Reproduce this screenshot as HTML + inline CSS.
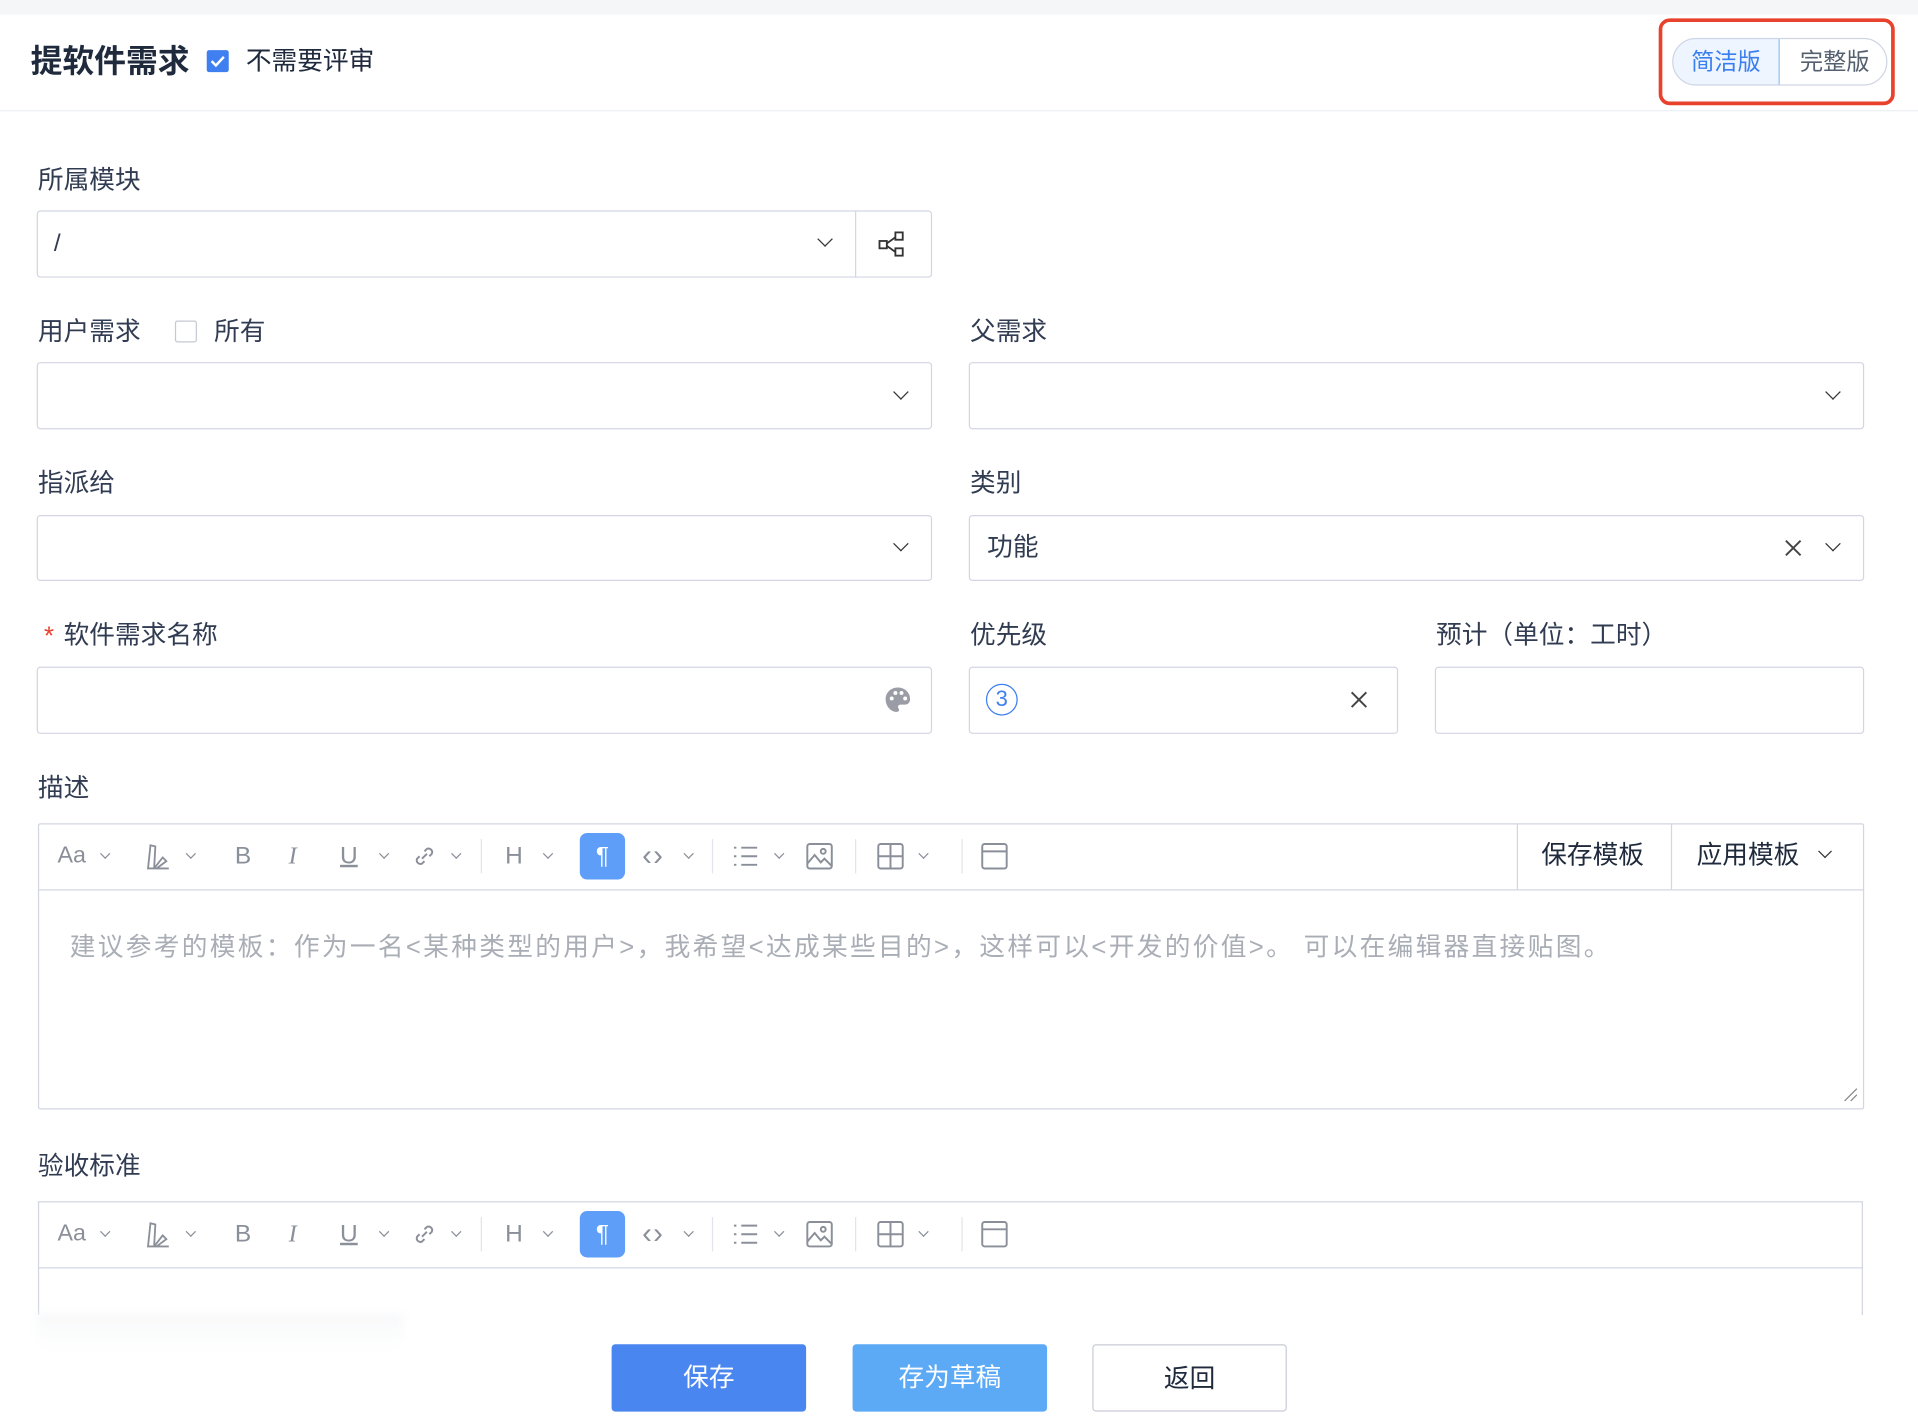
<!DOCTYPE html>
<html><head><meta charset="utf-8"><style>
html,body{margin:0;padding:0;width:1918px;height:1420px;overflow:hidden;background:#fff}
#w{position:absolute;left:0;top:0;width:1568px;height:1161px;transform:scale(1.22321);transform-origin:0 0;font-family:"Liberation Sans","Noto Sans CJK SC",sans-serif;color:#313c52}
.a{position:absolute}
.lbl{position:absolute;font-size:21px;line-height:24px;color:#313c52}
.box{position:absolute;border:1px solid #d3d6e2;border-radius:3px;box-sizing:border-box;background:#fff}
.chev{position:absolute;width:8px;height:8px;border-right:1.6px solid #333;border-bottom:1.6px solid #333;transform:rotate(45deg)}
.sc{position:absolute;width:5px;height:5px;border-right:1.3px solid #8a8f99;border-bottom:1.3px solid #8a8f99;transform:rotate(45deg)}
.ti{position:absolute;font-size:20px;color:#8a8f99;line-height:24px}
.sep{position:absolute;width:1px;height:28px;background:#e2e4ea}
.btn{position:absolute;height:55px;width:159px;border-radius:3px;box-sizing:border-box;font-size:21px;line-height:55px;text-align:center}
</style></head><body><div id="w">
<div class="a" style="left:0;top:0;width:1568px;height:12px;background:#f5f6f8"></div>
<div class="a" style="left:0;top:90px;width:1568px;height:1px;background:#eceef2"></div>
<div class="a" style="left:25px;top:35px;font-size:26px;line-height:30px;font-weight:bold;color:#202a3d">提软件需求</div>
<div class="a" style="left:169px;top:41px;width:18px;height:18px;background:#3f7ff0;border-radius:2px"><svg width="18" height="18"><path d="M4 9l3.5 3.5L14 5.5" stroke="#fff" stroke-width="2" fill="none"/></svg></div>
<div class="a" style="left:201px;top:39px;font-size:21px;line-height:24px;color:#202a3d">不需要评审</div>
<div class="a" style="left:1356px;top:15px;width:193px;height:71px;border:3px solid #e8412c;border-radius:9px;box-sizing:border-box"></div>
<div class="a" style="left:1367px;top:31px;width:176px;height:39px;border:1px solid #d0d5e3;border-radius:20px;box-sizing:border-box;overflow:hidden;font-size:19px;line-height:39px">
<div class="a" style="left:-1px;top:-1px;width:88px;height:39px;background:#eef5ff;border:1px solid #8fc0f8;border-radius:20px 0 0 20px;box-sizing:border-box;color:#3a7ff0;text-align:center;line-height:39px">简洁版</div>
<div class="a" style="left:88px;top:0;width:88px;text-align:center;color:#55606f">完整版</div></div>

<div class="lbl" style="left:31px;top:136px">所属模块</div>
<div class="box" style="left:30px;top:172px;width:732px;height:55px"></div>
<div class="a" style="left:699px;top:172px;width:1px;height:55px;background:#d3d6e2"></div>
<div class="a" style="left:44px;top:188px;font-size:20px">/</div>
<div class="chev" style="left:670px;top:191px"></div>
<svg class="a" style="left:717px;top:187px" width="25" height="25" viewBox="0 0 25 25" fill="none" stroke="#333" stroke-width="1.5"><rect x="2" y="10" width="6" height="6"/><rect x="15" y="3" width="6" height="6"/><rect x="15" y="16" width="6" height="6"/><path d="M8 12l7-5M8 14l7 5"/></svg>

<div class="lbl" style="left:31px;top:260px">用户需求</div>
<div class="a" style="left:143px;top:262px;width:18px;height:18px;border:1px solid #c5c9d4;border-radius:2px;box-sizing:border-box"></div>
<div class="lbl" style="left:175px;top:260px">所有</div>
<div class="lbl" style="left:793px;top:260px">父需求</div>
<div class="box" style="left:30px;top:296px;width:732px;height:55px"></div><div class="chev" style="left:732px;top:316px"></div>
<div class="box" style="left:792px;top:296px;width:732px;height:55px"></div><div class="chev" style="left:1494px;top:316px"></div>

<div class="lbl" style="left:31px;top:384px">指派给</div>
<div class="lbl" style="left:793px;top:384px">类别</div>
<div class="box" style="left:30px;top:421px;width:732px;height:54px"></div><div class="chev" style="left:732px;top:440px"></div>
<div class="box" style="left:792px;top:421px;width:732px;height:54px"></div><div class="chev" style="left:1494px;top:440px"></div>
<div class="a" style="left:807px;top:436px;font-size:21px;line-height:24px">功能</div>
<svg class="a" style="left:1458px;top:440px" width="16" height="16"><path d="M2 2l12 12M14 2L2 14" stroke="#444" stroke-width="1.6"/></svg>

<div class="lbl" style="left:36px;top:509px;color:#e8412c">*</div>
<div class="lbl" style="left:52px;top:508px">软件需求名称</div>
<div class="lbl" style="left:793px;top:508px">优先级</div>
<div class="lbl" style="left:1174px;top:508px">预计（单位：工时）</div>
<div class="box" style="left:30px;top:545px;width:732px;height:55px"></div>
<svg class="a" style="left:722px;top:560px" width="24" height="24" viewBox="0 0 24 24"><path d="M12 2C6 2 2 6.5 2 11.5 2 17 6 22 11 22c2 0 2.5-1.5 1.5-3-1-1.5 0-3 2-3h3c3 0 4.5-2 4.5-4.5C22 6 17.5 2 12 2z" fill="#9a9da5"/><circle cx="7" cy="11" r="1.6" fill="#fff"/><circle cx="10" cy="6.5" r="1.6" fill="#fff"/><circle cx="15" cy="6.5" r="1.6" fill="#fff"/><circle cx="18" cy="11" r="1.6" fill="#fff"/></svg>
<div class="box" style="left:792px;top:545px;width:351px;height:55px"></div>
<div class="a" style="left:806px;top:559px;width:26px;height:26px;border:1.6px solid #3f7ff0;border-radius:50%;box-sizing:border-box;color:#3f7ff0;font-size:18px;line-height:23px;text-align:center">3</div>
<svg class="a" style="left:1103px;top:564px" width="16" height="16"><path d="M2 2l12 12M14 2L2 14" stroke="#444" stroke-width="1.6"/></svg>
<div class="box" style="left:1173px;top:545px;width:351px;height:55px"></div>

<div class="lbl" style="left:31px;top:633px">描述</div>
<div class="box" style="left:31px;top:673px;width:1493px;height:234px;border-radius:2px"></div>
<div class="a" style="left:31px;top:727px;width:1493px;height:1px;background:#d3d6e2"></div>
<div class="a" style="left:1240px;top:673px;width:1px;height:54px;background:#d3d6e2"></div>
<div class="a" style="left:1366px;top:673px;width:1px;height:54px;background:#d3d6e2"></div>
<div class="a" style="left:1260px;top:688px;font-size:21px;line-height:24px;color:#202a3d">保存模板</div>
<div class="a" style="left:1387px;top:688px;font-size:21px;line-height:24px;color:#202a3d">应用模板</div>
<div class="chev" style="left:1488px;top:692px;width:7px;height:7px"></div>
<div class="a" style="left:57px;top:763px;font-size:21px;line-height:24px;color:#a9adb5;white-space:nowrap;letter-spacing:1.9px">建议参考的模板：作为一名&lt;某种类型的用户&gt;，我希望&lt;达成某些目的&gt;，这样可以&lt;开发的价值&gt;。 可以在编辑器直接贴图。</div>
<svg class="a" style="left:1506px;top:888px" width="14" height="14"><path d="M2 12L12 2M7 12l5-5" stroke="#888" stroke-width="1"/></svg>

<div class="lbl" style="left:31px;top:942px">验收标准</div>
<div class="a" style="left:31px;top:982px;width:1492px;height:93px;border:1px solid #d3d6e2;border-bottom:none;box-sizing:border-box"></div>
<div class="a" style="left:31px;top:1036px;width:1492px;height:1px;background:#d3d6e2"></div>
<div class="a" style="left:30px;top:1074px;width:300px;height:30px;background:linear-gradient(#f8f9fa,#fff);filter:blur(3px)"></div>

<div id="tb1"></div>
<div class="btn" style="left:500px;top:1099px;background:#4a86ef;color:#fff">保存</div>
<div class="btn" style="left:697px;top:1099px;background:#5ca9f5;color:#fff">存为草稿</div>
<div class="btn" style="left:893px;top:1099px;border:1px solid #c9ccd6;color:#202a3d;background:#fff">返回</div>
</div>
<script>
function tb(y){var h='';
function t(x,s,st){h+='<div class="ti" style="left:'+x+'px;top:'+(y-12)+'px;'+(st||'')+'">'+s+'</div>'}
function c(x){h+='<div class="sc" style="left:'+x+'px;top:'+(y-5)+'px"></div>'}
function s(x){h+='<div class="sep" style="left:'+x+'px;top:'+(y-14)+'px"></div>'}
t(47,'Aa','font-size:19px');c(83);
h+='<svg class="a" style="left:117px;top:'+(y-12)+'px" width="24" height="24" fill="none" stroke="#8a8f99" stroke-width="1.5"><path d="M4 22l2-19 4 1-1 18zM9 22l7-9 3 3-8 6M9 22h12"/></svg>';c(153);
t(192,'B');t(236,'I','font-style:italic;font-family:Liberation Serif');
t(278,'U','text-decoration:underline');c(311);
h+='<svg class="a" style="left:336px;top:'+(y-11)+'px" width="22" height="22" fill="none" stroke="#8a8f99" stroke-width="1.6"><path d="M9 13l4-4M7 11l-2 2a3 3 0 004 4l2-2M15 11l2-2a3 3 0 00-4-4l-2 2"/></svg>';c(370);
s(393);t(413,'H');c(445);
h+='<div class="a" style="left:474px;top:'+(y-19)+'px;width:37px;height:38px;background:#5e9ef8;border-radius:6px;color:#fff;font-size:20px;line-height:38px;text-align:center">¶</div>';
t(525,'‹›','font-size:24px;letter-spacing:1px');c(560);s(582);
h+='<svg class="a" style="left:599px;top:'+(y-10)+'px" width="22" height="20" stroke="#8a8f99" stroke-width="1.6"><path d="M1 3h2M7 3h13M1 10h2M7 10h13M1 17h2M7 17h13"/></svg>';c(634);
h+='<svg class="a" style="left:658px;top:'+(y-12)+'px" width="24" height="24" fill="none" stroke="#8a8f99" stroke-width="1.6"><rect x="2" y="2" width="20" height="20" rx="2"/><circle cx="15" cy="8" r="2"/><path d="M2 18l6-7 5 6 3-3 6 6"/></svg>';s(699);
h+='<svg class="a" style="left:717px;top:'+(y-11)+'px" width="22" height="22" fill="none" stroke="#8a8f99" stroke-width="1.6"><rect x="1" y="1" width="20" height="20" rx="2"/><path d="M1 11h20M11 1v20"/></svg>';c(752);s(786);
h+='<svg class="a" style="left:802px;top:'+(y-11)+'px" width="22" height="22" fill="none" stroke="#8a8f99" stroke-width="1.6"><rect x="1" y="1" width="20" height="20" rx="2"/><path d="M1 7h20"/></svg>';
return h}
document.getElementById('tb1').innerHTML=tb(700)+tb(1009);
</script>
</body></html>
